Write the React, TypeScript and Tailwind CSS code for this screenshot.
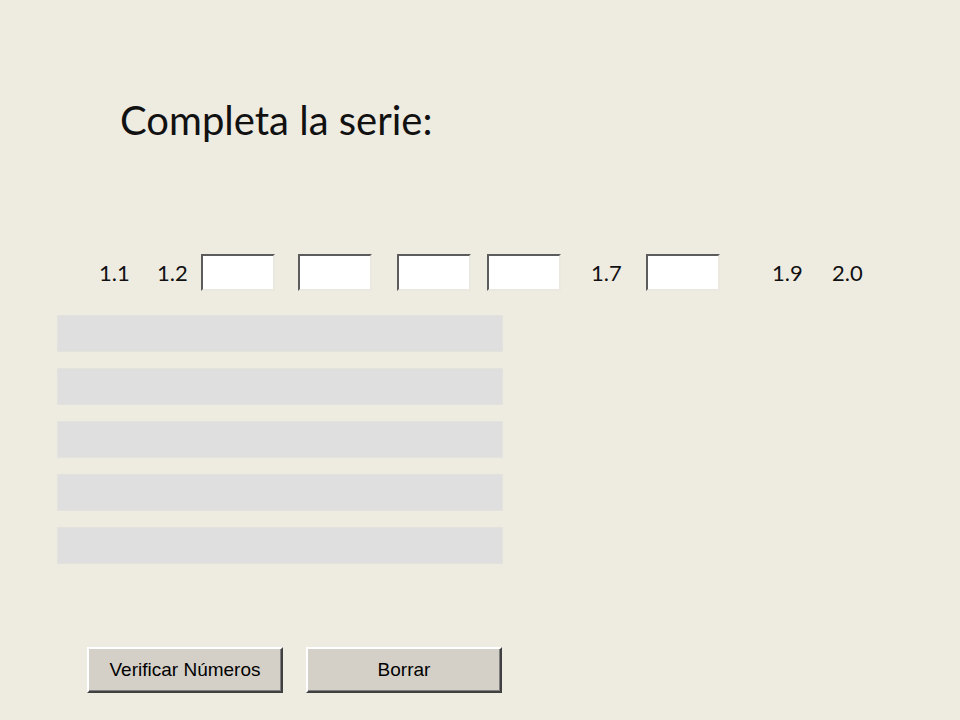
import React from 'react';

const boxCls =
  'h-[37px] w-[74px] shrink-0 bg-white border-2 border-t-[#5c5c5c] border-l-[#5c5c5c] border-r-[#ebe8df] border-b-[#ebe8df]';

const btnCls =
  'h-[46px] w-[196px] bg-[#d4d0c8] border-2 border-t-white border-l-white border-r-[#404040] border-b-[#404040] shadow-[inset_-1px_-1px_0_#808080] text-[19px] text-black font-["Liberation_Sans",Arial,sans-serif]';

export default function App() {
  return (
    <div className="w-[960px] h-[720px] bg-[#eeebe1] flex flex-col font-['Lato','Open_Sans',sans-serif] text-[#111]">
      <h1 className="pt-[96px] pl-[120px] text-[40px] leading-[48px] font-normal">Completa la serie:</h1>

      {/* fila de la serie */}
      <div className="mt-[110px] flex items-center h-[37px] pl-[99px] text-[22px]">
        <span className="w-[58px]">1.1</span>
        <span className="w-[44px]">1.2</span>
        <input className={boxCls} />
        <input className={`${boxCls} ml-[23px]`} />
        <input className={`${boxCls} ml-[25px]`} />
        <input className={`${boxCls} ml-[16px]`} />
        <span className="w-[85px] pl-[30px]">1.7</span>
        <input className={boxCls} />
        <span className="w-[112px] pl-[52px]">1.9</span>
        <span>2.0</span>
      </div>

      <div className="mt-[24px] ml-[57px] flex flex-col gap-[16px]">
        {[0, 1, 2, 3, 4].map((i) => (
          <div key={i} className="h-[37px] w-[446px] bg-[#dfdfdf] border border-[#e4e2dc]" />
        ))}
      </div>

      <div className="mt-[83px] ml-[87px] flex gap-[23px]">
        <button className={btnCls}>Verificar Números</button>
        <button className={btnCls}>Borrar</button>
      </div>
    </div>
  );
}
